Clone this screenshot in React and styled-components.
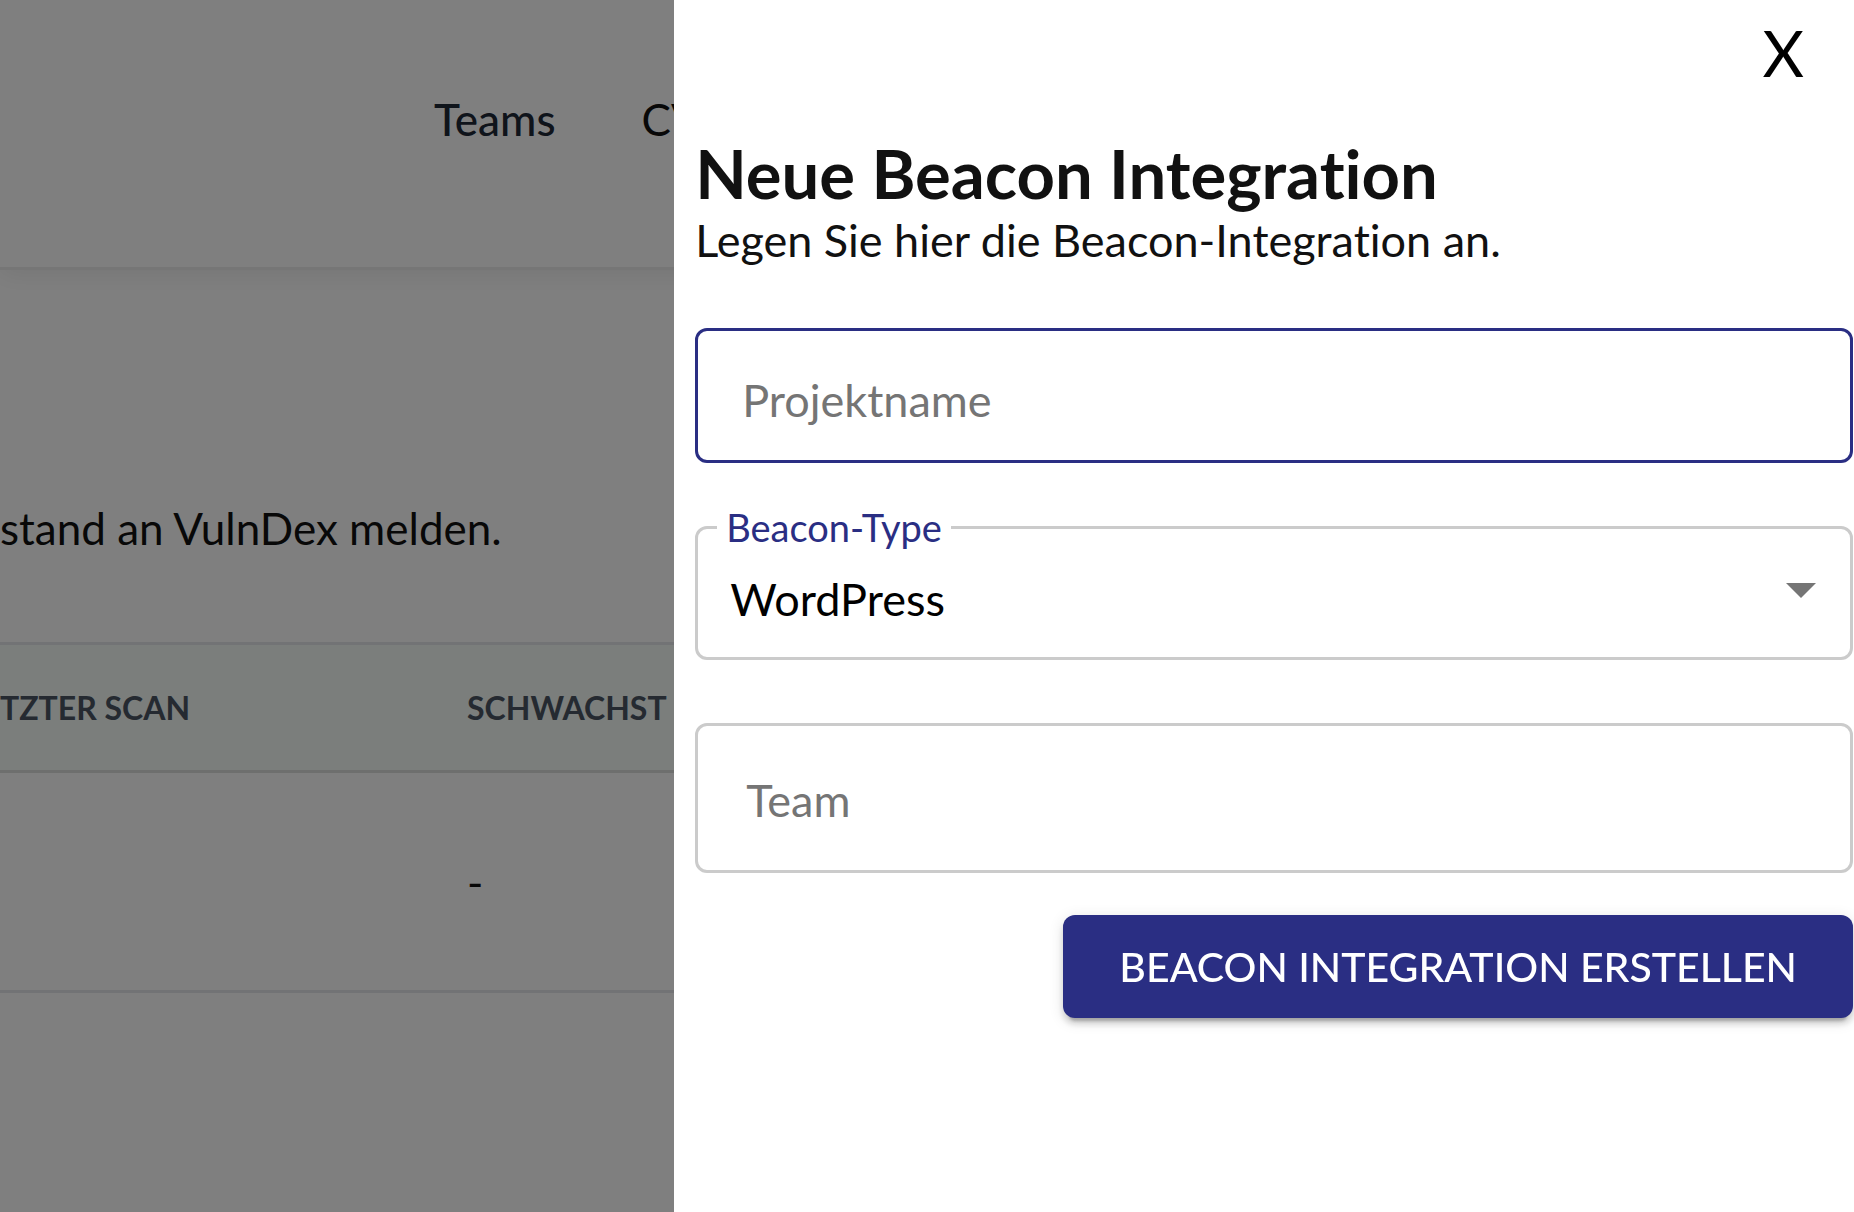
import React, { useState } from 'react';
import styled, { createGlobalStyle } from 'styled-components';

const GlobalStyle = createGlobalStyle`
    *, *::before, *::after {
        box-sizing: border-box;
    }
    body {
        margin: 0;
        overflow: hidden;
        background: #fff;
        color: #111;
        font-family: Lato, 'Liberation Sans', sans-serif;
        font-size: 44px;
        font-variant-ligatures: none;
        line-height: 56px;
    }
    input, select, button {
        font: inherit;
        color: inherit;
    }
`;

const Page = styled.div`
    min-height: 100vh;
    overflow: hidden;
`;

const Header = styled.header`
    border-bottom: 3px solid #ececec;
    box-shadow: 0 4px 24px rgba(0, 0, 0, 0.08);
`;

const Nav = styled.nav`
    display: flex;
    gap: 86px;
    padding: 91px 0 120px 434px;
`;

const NavLink = styled.a`
    color: ${props => (props.$active ? '#1f2937' : '#111')};
    font-weight: ${props => (props.$active ? 500 : 400)};
    text-decoration: none;
`;

const Intro = styled.p`
    margin: 0;
    padding: 230px 0 86px;
`;

const ScanTable = styled.table`
    width: 100%;
    border-collapse: collapse;
    table-layout: fixed;
    text-align: left;
    border-bottom: 3px solid #e5e7eb;
`;

const HeadCell = styled.th`
    width: ${props => props.$width || 'auto'};
    height: 128px;
    padding: 0;
    border-top: 3px solid #e5e7eb;
    border-bottom: 3px solid #dcdfdd;
    background: #f6fcf9;
    color: #4b5563;
    font-size: 32px;
    font-weight: 700;
    white-space: nowrap;
`;

const Cell = styled.td`
    height: 220px;
    padding: 0;
`;

const Backdrop = styled.div`
    position: fixed;
    inset: 0;
    display: grid;
    grid-template-columns: 4fr 7fr;
    background: rgba(0, 0, 0, 0.5);
`;

const Drawer = styled.aside`
    grid-column: 2;
    display: flex;
    flex-direction: column;
    padding: 15px 1px 0 21px;
    background: #fff;
    font-size: 45px;
`;

const CloseButton = styled.button`
    align-self: flex-end;
    margin-right: 43px;
    padding: 0 6px;
    border: 0;
    background: none;
    color: #000;
    font-size: 64px;
    line-height: 76px;
    cursor: pointer;
`;

const Title = styled.h1`
    margin: 43px 0 0;
    font-size: 67px;
    font-weight: 700;
    line-height: 78px;
`;

const Subtitle = styled.p`
    margin: 0;
`;

const Form = styled.form`
    display: flex;
    flex-direction: column;
    margin-top: 60px;
`;

const TextInput = styled.input`
    width: 100%;
    height: ${props => (props.$tall ? 150 : 135)}px;
    padding: ${props => (props.$tall ? '4px 48px 0' : '8px 44px 0')};
    border: 3px solid ${props => (props.$active ? '#2a2e83' : '#cbcbcb')};
    border-radius: 12px;
    outline: none;
    background: #fff;

    &::placeholder {
        color: #757575;
        opacity: 1;
    }
`;

const SelectBox = styled.fieldset`
    display: grid;
    align-items: center;
    min-width: 0;
    margin: 45px 0 63px;
    padding: 0;
    border: 3px solid #cbcbcb;
    border-radius: 12px;
`;

const SelectLegend = styled.legend`
    margin-left: 19px;
    padding: 0 9px;
    color: #2a2e83;
    font-size: 38px;
    line-height: 38px;
`;

const Select = styled.select`
    grid-area: 1 / 1;
    width: 100%;
    height: 111px;
    padding: 0 80px 6px 32px;
    border: 0;
    border-radius: 12px;
    outline: none;
    background: none;
    color: #000;
    appearance: none;
`;

const Arrow = styled.svg`
    grid-area: 1 / 1;
    justify-self: end;
    width: 30px;
    height: 15px;
    margin: 0 34px 22px 0;
    fill: #757575;
    pointer-events: none;
`;

const SubmitButton = styled.button`
    align-self: flex-end;
    margin-top: 42px;
    padding: 24px 56px 23px;
    border: 0;
    border-radius: 12px;
    background: #2a2e83;
    box-shadow: 0 9px 3px -6px rgba(0, 0, 0, 0.2), 0 6px 6px rgba(0, 0, 0, 0.14),
        0 3px 15px rgba(0, 0, 0, 0.12);
    color: #fff;
    font-size: 41px;
    font-weight: 500;
    text-transform: uppercase;
    white-space: nowrap;
    cursor: pointer;
`;

function ScanPage() {
    return (
        <Page>
            <Header>
                <Nav>
                    <NavLink href="#teams" $active>Teams</NavLink>
                    <NavLink href="#cve">CV</NavLink>
                </Nav>
            </Header>
            <Intro>stand an VulnDex melden.</Intro>
            <ScanTable>
                <thead>
                    <tr>
                        <HeadCell $width="467px">TZTER SCAN</HeadCell>
                        <HeadCell>SCHWACHST</HeadCell>
                    </tr>
                </thead>
                <tbody>
                    <tr>
                        <Cell />
                        <Cell>-</Cell>
                    </tr>
                </tbody>
            </ScanTable>
        </Page>
    );
}

function BeaconForm() {
    const [name, setName] = useState('');
    const [type, setType] = useState('WordPress');
    const [team, setTeam] = useState('');

    return (
        <Form onSubmit={e => e.preventDefault()}>
            <TextInput
                $active
                aria-label="Projektname"
                placeholder="Projektname"
                value={name}
                onChange={e => setName(e.target.value)}
            />
            <SelectBox>
                <SelectLegend>
                    <label htmlFor="beacon-type">Beacon-Type</label>
                </SelectLegend>
                <Select id="beacon-type" value={type} onChange={e => setType(e.target.value)}>
                    <option>WordPress</option>
                </Select>
                <Arrow viewBox="0 0 30 15" aria-hidden="true">
                    <path d="M0 0h30L15 15z" />
                </Arrow>
            </SelectBox>
            <TextInput
                $tall
                aria-label="Team"
                placeholder="Team"
                value={team}
                onChange={e => setTeam(e.target.value)}
            />
            <SubmitButton type="submit">Beacon Integration erstellen</SubmitButton>
        </Form>
    );
}

export default function App() {
    return (
        <>
            <GlobalStyle />
            <ScanPage />
            <Backdrop>
                <Drawer>
                    <CloseButton type="button">X</CloseButton>
                    <Title>Neue Beacon Integration</Title>
                    <Subtitle>Legen Sie hier die Beacon-Integration an.</Subtitle>
                    <BeaconForm />
                </Drawer>
            </Backdrop>
        </>
    );
}
